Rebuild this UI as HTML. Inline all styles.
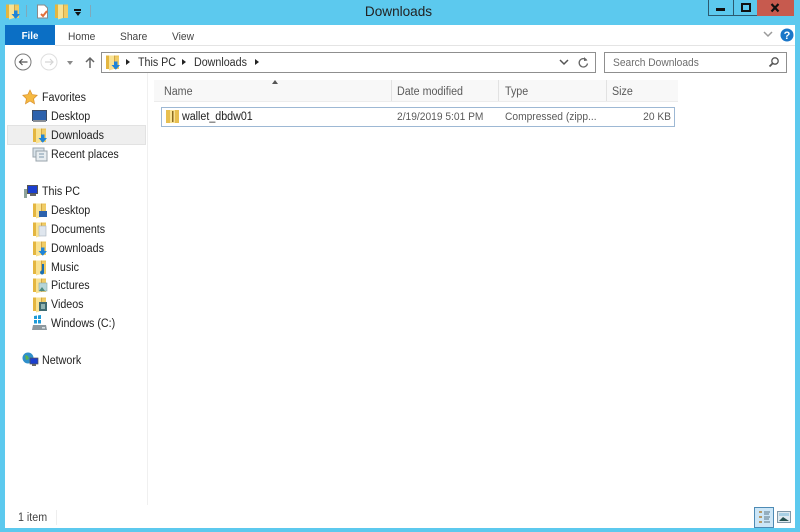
<!DOCTYPE html>
<html><head><meta charset="utf-8"><style>
html,body{margin:0;padding:0}
body{width:800px;height:532px;position:relative;overflow:hidden;background:#5cc9ee;font-family:"Liberation Sans",sans-serif;font-size:11.5px;color:#222}
.a,.t,svg{position:absolute}
.t{white-space:nowrap;line-height:14px;filter:blur(.3px);transform:scaleX(.93);transform-origin:0 50%}
svg{filter:blur(.35px)}
.g{color:#5a5a5a}
</style></head><body>
<svg width="0" height="0" style="left:0;top:0"><defs>
<g id="f"><path d="M1 1.500h13v13.500H1z" fill="#eec55a"/><path d="M1 1.500h3V15H1z" fill="#e4b640"/><path d="M4 1.500h5V15l-5 1.500z" fill="#f9e292"/><path d="M9 1.500h1V15H9z" fill="#d0a546"/><path d="M10 3h4v12h-4z" fill="#f0cc66"/></g>
<g id="dl"><use href="#f"/><path d="M9 7.500h3.500v3.500H15l-4.200 4.700L6.500 11H9z" fill="#1f84d8"/></g>
</defs></svg>

<!-- title bar -->
<svg style="left:5px;top:3px" width="16" height="17"><use href="#dl"/></svg>
<div class="a" style="left:26px;top:5px;width:1px;height:12px;background:#7fa9ba"></div>
<svg style="left:36px;top:4px" width="14" height="15"><path d="M1.500 1h7l3 3v10h-10z" fill="#fff" stroke="#8a8a8a"/><path d="M5 10l2 2 4-5" fill="none" stroke="#e2703a" stroke-width="2"/></svg>
<svg style="left:54px;top:3px" width="16" height="17"><use href="#f"/></svg>
<div class="a" style="left:74px;top:9px;width:7px;height:2px;background:#111"></div>
<div class="a" style="left:75px;top:12px;border:3px solid transparent;border-top:4px solid #111;border-bottom:0"></div>
<div class="a" style="left:90px;top:5px;width:1px;height:12px;background:#7fa9ba"></div>
<div class="t" style="left:300px;top:3px;width:197px;text-align:center;font-size:14px;line-height:16px;color:#222;transform:scaleX(.97);transform-origin:50% 50%">Downloads</div>

<!-- window buttons -->
<div class="a" style="left:708px;top:0;width:24px;height:15px;border:1px solid #2c5a70;border-top:0;border-right:0"></div>
<div class="a" style="left:733px;top:0;width:23px;height:15px;border:1px solid #2c5a70;border-top:0"></div>
<div class="a" style="left:757px;top:0;width:37px;height:16px;background:#c75a4e"></div>
<div class="a" style="left:716px;top:8px;width:9px;height:3px;background:#111"></div>
<div class="a" style="left:741px;top:3px;width:6px;height:5px;border:2px solid #111"></div>
<svg style="left:770px;top:3px" width="11" height="10"><path d="M1.500 1l7 7.500M8.500 1l-7 7.500" stroke="#111" stroke-width="2.200"/></svg>

<!-- main window -->
<div class="a" style="left:5px;top:25px;width:790px;height:503px;background:#fff"></div>
<div class="a" style="left:5px;top:25px;width:50px;height:20px;background:#0b6fc5"></div>
<div class="t" style="left:5px;top:29px;width:50px;text-align:center;color:#fff;font-weight:bold;font-size:10.500px;transform-origin:50% 50%">File</div>
<div class="a" style="left:55px;top:45px;width:740px;height:1px;background:#e4e4e4"></div>
<div class="t" style="left:68px;top:30px;font-size:11px;color:#444">Home</div>
<div class="t" style="left:120px;top:30px;font-size:11px;color:#444">Share</div>
<div class="t" style="left:172px;top:30px;font-size:11px;color:#444">View</div>
<svg style="left:763px;top:31px" width="11" height="8"><path d="M1 1l4 4 4-4" fill="none" stroke="#9a9a9a" stroke-width="1.500"/></svg>
<svg style="left:780px;top:28px" width="14" height="14"><circle cx="7" cy="7" r="6.500" fill="#1a76c8"/><text x="7" y="11" font-size="11" font-weight="bold" fill="#fff" text-anchor="middle" font-family="Liberation Sans">?</text></svg>

<!-- nav buttons -->
<svg style="left:14px;top:52px" width="20" height="20"><circle cx="9" cy="10" r="8" fill="#fff" stroke="#7a7a7a"/><path d="M13.500 10H5.500M8.500 7l-3 3 3 3" fill="none" stroke="#555" stroke-width="1.200"/></svg>
<svg style="left:40px;top:52px" width="20" height="20"><circle cx="9" cy="10" r="8" fill="#fff" stroke="#dedede"/><path d="M5 10h8M10 7l3 3-3 3" fill="none" stroke="#d5d5d5" stroke-width="1.200"/></svg>
<div class="a" style="left:67px;top:61px;border:3.500px solid transparent;border-top:4px solid #8a8a8a;border-bottom:0"></div>
<svg style="left:84px;top:56px" width="12" height="13"><path d="M6 12V2M2 6l4-4 4 4" fill="none" stroke="#666" stroke-width="1.500"/></svg>

<!-- address -->
<div class="a" style="left:101px;top:52px;width:493px;height:19px;border:1px solid #8f8f8f;background:#fff"></div>
<svg style="left:105px;top:54px" width="16" height="17"><use href="#dl"/></svg>
<div class="a" style="left:126px;top:59px;border:3.500px solid transparent;border-left:4px solid #222;border-right:0"></div>
<div class="t" style="left:138px;top:56px;color:#2d2d2d">This PC</div>
<div class="a" style="left:182px;top:59px;border:3.500px solid transparent;border-left:4px solid #222;border-right:0"></div>
<div class="t" style="left:194px;top:56px;color:#2d2d2d">Downloads</div>
<div class="a" style="left:255px;top:59px;border:3.500px solid transparent;border-left:4px solid #222;border-right:0"></div>
<svg style="left:559px;top:59px" width="10" height="8"><path d="M1 1l4 4 4-4" fill="none" stroke="#555" stroke-width="1.500"/></svg>
<svg style="left:577px;top:56px" width="12" height="13"><path d="M9.500 4a4.200 4.200 0 1 0 1 3.500" fill="none" stroke="#666" stroke-width="1.300"/><path d="M7 1l3.500 3.500L7 5z" fill="#666"/></svg>

<!-- search -->
<div class="a" style="left:604px;top:52px;width:181px;height:19px;border:1px solid #8f8f8f"></div>
<div class="t g" style="left:613px;top:56px;color:#6d6d6d;font-size:11px">Search Downloads</div>
<svg style="left:768px;top:56px" width="12" height="12"><circle cx="7" cy="5" r="3.200" fill="none" stroke="#555" stroke-width="1.300"/><path d="M4.500 7.500L1.500 10.500" stroke="#555" stroke-width="1.800"/></svg>

<!-- nav pane -->
<div class="a" style="left:147px;top:73px;width:1px;height:432px;background:#f0f0f0"></div>
<div class="a" style="left:7px;top:125px;width:137px;height:18px;background:#efefef;border:1px solid #e2e2e2"></div>

<svg style="left:22px;top:89px" width="16" height="16"><path d="M8 1l2.200 4.600 5 .7-3.600 3.500.9 5L8 12l-4.500 2.800.9-5L.8 6.300l5-.7z" fill="#f5b942" stroke="#d98f2a" stroke-width=".7"/></svg>
<div class="t" style="left:42px;top:91px">Favorites</div>

<svg style="left:32px;top:110px" width="16" height="13"><rect x=".5" y=".5" width="14" height="10" fill="#2d62ad" stroke="#3c4c66"/><rect x="1" y="10" width="13" height="2" fill="#8a8f96"/></svg>
<div class="t" style="left:51px;top:110px">Desktop</div>
<svg style="left:32px;top:127px" width="16" height="17"><use href="#dl"/></svg>
<div class="t" style="left:51px;top:129px">Downloads</div>
<svg style="left:32px;top:147px" width="16" height="15"><rect x="1" y="1" width="11" height="9" fill="#d9e3ea" stroke="#9aa4ad"/><rect x="4" y="4" width="11" height="10" fill="#e8edf0" stroke="#98a3ab"/><path d="M7 7h5M7 10h5" stroke="#7d98ad"/></svg>
<div class="t" style="left:51px;top:148px">Recent places</div>

<svg style="left:23px;top:184px" width="16" height="15"><rect x="4.500" y="1.500" width="10" height="8" fill="#1b3fcf" stroke="#555"/><rect x="7" y="10" width="6" height="2" fill="#666"/><rect x="1" y="5" width="3" height="9" fill="#8fa39a"/></svg>
<div class="t" style="left:42px;top:185px">This PC</div>

<svg style="left:32px;top:202px" width="16" height="17"><use href="#f"/><rect x="7" y="9" width="8" height="6" fill="#2d62ad"/></svg>
<div class="t" style="left:51px;top:204px">Desktop</div>
<svg style="left:32px;top:221px" width="16" height="17"><use href="#f"/><rect x="7" y="5" width="7" height="10" fill="#dfe6ee" stroke="#a9b3bd" stroke-width=".6"/></svg>
<div class="t" style="left:51px;top:223px">Documents</div>
<svg style="left:32px;top:240px" width="16" height="17"><use href="#dl"/></svg>
<div class="t" style="left:51px;top:242px">Downloads</div>
<svg style="left:32px;top:259px" width="16" height="17"><use href="#f"/><path d="M10 5h2v8a2 2 0 1 1-2-1.500z" fill="#1a6fb5"/></svg>
<div class="t" style="left:51px;top:261px">Music</div>
<svg style="left:32px;top:277px" width="16" height="17"><use href="#f"/><rect x="7" y="6" width="8" height="8" fill="#b6d5d8" stroke="#8aa" stroke-width=".6"/><path d="M7 14l3-4 3 4z" fill="#4c8a80"/></svg>
<div class="t" style="left:51px;top:279px">Pictures</div>
<svg style="left:32px;top:296px" width="16" height="17"><use href="#f"/><rect x="7" y="6" width="8" height="9" fill="#3f6a70"/><rect x="9" y="8" width="4" height="5" fill="#8fb2b0"/></svg>
<div class="t" style="left:51px;top:298px">Videos</div>
<svg style="left:32px;top:315px" width="16" height="16"><path d="M2 1l3-.5v3.500H2zM6 .4l3-.4v4H6zM2 5h3v3.500H2zM6 5h3v3.500H6z" fill="#1d9bd8"/><path d="M1 10h13l1 5H0z" fill="#8d989e"/><rect x="10" y="12" width="3" height="1.500" fill="#d8e0e4"/></svg>
<div class="t" style="left:51px;top:317px">Windows (C:)</div>

<svg style="left:22px;top:352px" width="17" height="16"><circle cx="6" cy="6" r="5.500" fill="#2f8fca"/><path d="M3 3l3 1 1 3-3 1z" fill="#5cb34e"/><rect x="8" y="6" width="8" height="6" fill="#1b3fcf" stroke="#555" stroke-width=".7"/><rect x="10" y="12" width="4" height="2" fill="#666"/></svg>
<div class="t" style="left:42px;top:354px">Network</div>

<!-- headers -->
<div class="a" style="left:154px;top:80px;width:524px;height:21px;background:#f8f8f8"></div>
<div class="a" style="left:391px;top:80px;width:1px;height:21px;background:#e2e2e2"></div>
<div class="a" style="left:498px;top:80px;width:1px;height:21px;background:#e2e2e2"></div>
<div class="a" style="left:606px;top:80px;width:1px;height:21px;background:#e2e2e2"></div>
<div class="a" style="left:154px;top:101px;width:524px;height:1px;background:#ececec"></div>
<div class="a" style="left:272px;top:80px;border:3.500px solid transparent;border-bottom:4px solid #555;border-top:0"></div>
<div class="t g" style="left:164px;top:85px">Name</div>
<div class="t g" style="left:397px;top:85px">Date modified</div>
<div class="t g" style="left:505px;top:85px">Type</div>
<div class="t g" style="left:612px;top:85px">Size</div>

<!-- row -->
<div class="a" style="left:161px;top:107px;width:512px;height:18px;border:1px solid #9db8d4"></div>
<svg style="left:165px;top:108px" width="16" height="17"><path d="M1 2h13v13H1z" fill="#e8bf50"/><path d="M5 2h5v13H5z" fill="#f9e292"/><path d="M7 3h1.500v11H7z" fill="#8a6a20"/></svg>
<div class="t" style="left:182px;top:110px;color:#222">wallet_dbdw01</div>
<div class="t g" style="left:397px;top:110px;font-size:11px">2/19/2019 5:01 PM</div>
<div class="t g" style="left:505px;top:110px;font-size:11px">Compressed (zipp...</div>
<div class="t g" style="left:600px;top:110px;width:71px;text-align:right;font-size:11px;transform-origin:100% 50%">20 KB</div>

<!-- status -->
<div class="t" style="left:18px;top:511px;color:#444">1 item</div>
<div class="a" style="left:56px;top:510px;width:1px;height:15px;background:#eee"></div>
<div class="a" style="left:754px;top:507px;width:18px;height:19px;background:#cce6f7;border:1px solid #4d8bb5"></div>
<svg style="left:758px;top:510px" width="14" height="15"><path d="M1 2h3M1 7h3M1 12h3" stroke="#b59a6a" stroke-width="2"/><path d="M6 2h6M6 4h5M6 7h6M6 9h5M6 12h6" stroke="#5c7686"/></svg>
<svg style="left:777px;top:511px" width="15" height="13"><rect x=".5" y=".5" width="13" height="11" fill="#dfeaf0" stroke="#7f98a8"/><path d="M2 10l4-4 6 4z" fill="#24504e"/><rect x="2" y="2" width="10" height="3" fill="#a8d0e4"/></svg>
</body></html>
